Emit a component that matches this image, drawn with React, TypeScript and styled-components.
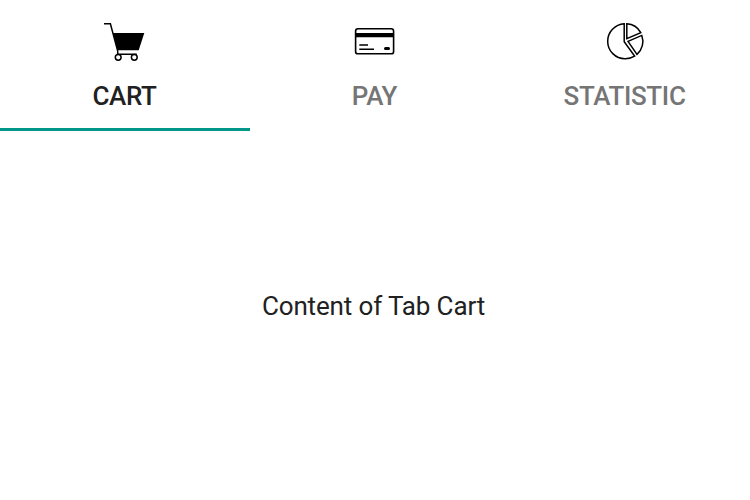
import React from "react";
import styled, { createGlobalStyle } from "styled-components";

const GlobalStyle = createGlobalStyle`
  body {
    margin: 0;
    background: #fff;
    font-family: Roboto, sans-serif;
  }
`;
const Screen = styled.main`
  height: 500px;
  display: flex;
  flex-direction: column;
  overflow: hidden;
`;
const TabBar = styled.nav`
  display: grid;
  grid-template-columns: repeat(3, 1fr);
  height: 131px;
`;
const Tab = styled.button<{ $active?: boolean }>`
  box-sizing: border-box;
  border: 0;
  border-bottom: 3px solid ${(p) => (p.$active ? "#009688" : "transparent")};
  background: none;
  padding: 17px 0 0;
  display: flex;
  flex-direction: column;
  align-items: center;
  gap: 15px;
  color: ${(p) => (p.$active ? "#212121" : "#757575")};
  font: 500 26px/32px Roboto, sans-serif;
  letter-spacing: -0.35px;
`;
const Label = styled.span`
  padding-right: 1px;
`;
const Icon = styled.svg`
  width: 48px;
  height: 48px;
  flex: none;
  fill: none;
  stroke: #000;
`;
const Content = styled.section`
  flex: 1;
  display: flex;
  justify-content: center;
  padding: 159px 3px 0 0;
  color: #212121;
  font: 400 26px/32px Roboto, sans-serif;
  letter-spacing: -0.14px;
`;

function CartIcon() {
  return (
    <Icon viewBox="0 0 48 48" strokeWidth="1.5">
      <path d="M3 6.7H9.4L16.7 34V37.2H35.8" />
      <path d="M12 16H43.3L37.7 33.3H16.5Z" fill="#000" stroke="none" />
      <circle cx="17.2" cy="40.3" r="2.9" fill="#fff" />
      <circle cx="33.3" cy="40.3" r="2.9" fill="#fff" />
    </Icon>
  );
}

function CardIcon() {
  return (
    <Icon viewBox="0 0 48 48" strokeWidth="1.6">
      <rect x="4.6" y="11.8" width="38" height="25" rx="2.4" />
      <path d="M4.6 18.1H42.6" strokeWidth="4.2" />
      <path d="M8.3 28H17M8.3 32.2H23" strokeWidth="1.4" />
      <rect x="33" y="30.1" width="6" height="3" rx="1.5" fill="#000" stroke="none" />
    </Icon>
  );
}

function PieIcon() {
  return (
    <Icon viewBox="0 0 48 48" strokeWidth="1.5" stroke="#222">
      <path d="M23.2 6.8A17.6 17.6 0 0 0 6.7 24.4A17.4 17.4 0 0 0 24 41.7A17.4 17.4 0 0 0 33.6 39.1L23.2 24.8Z" />
      <path d="M25.8 6.8A17.4 17.4 0 0 1 39.8 15.6L25.8 21.6Z" />
      <path d="M27 24.4L40.8 18.4A17.4 17.4 0 0 1 36 37.4Z" />
    </Icon>
  );
}

export default function App() {
  return (
    <>
      <GlobalStyle />
      <Screen>
        <TabBar>
          <Tab $active>
            <CartIcon />
            <Label>CART</Label>
          </Tab>
          <Tab>
            <CardIcon />
            <Label>PAY</Label>
          </Tab>
          <Tab>
            <PieIcon />
            <Label>STATISTIC</Label>
          </Tab>
        </TabBar>
        <Content>Content of Tab Cart</Content>
      </Screen>
    </>
  );
}
